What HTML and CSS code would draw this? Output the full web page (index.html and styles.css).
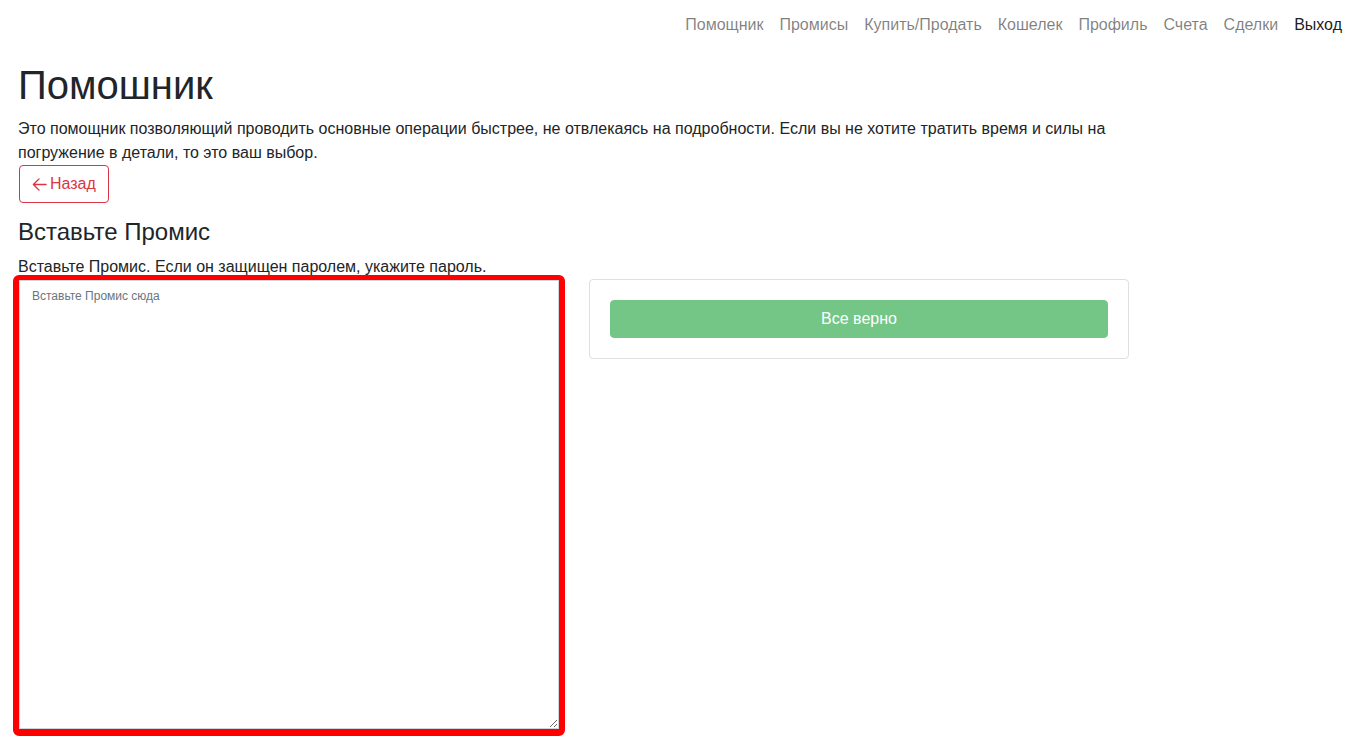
FILE: index.html
```html
<!DOCTYPE html>
<html lang="ru">
<head>
<meta charset="utf-8">
<title>Помошник</title>
<link rel="stylesheet" href="styles.css">
</head>
<body>
<nav class="navbar">
  <ul class="nav-list">
    <li><a class="nav-link" href="#">Помощник</a></li>
    <li><a class="nav-link" href="#">Промисы</a></li>
    <li><a class="nav-link" href="#">Купить/Продать</a></li>
    <li><a class="nav-link" href="#">Кошелек</a></li>
    <li><a class="nav-link" href="#">Профиль</a></li>
    <li><a class="nav-link" href="#">Счета</a></li>
    <li><a class="nav-link" href="#">Сделки</a></li>
    <li><a class="nav-link nav-link-active" href="#">Выход</a></li>
  </ul>
</nav>
<main class="content">
  <h1 class="page-title">Помошник</h1>
  <p class="lead-text">Это помощник позволяющий проводить основные операции быстрее, не отвлекаясь на подробности. Если вы не хотите тратить время и силы на погружение в детали, то это ваш выбор.</p>
  <button class="btn-back" type="button">
    <svg class="arrow-icon" width="15" height="15" viewBox="0 0 16 16" aria-hidden="true"><path d="M15 8H1.5M7.5 2L1.5 8l6 6" fill="none" stroke="currentColor" stroke-width="1.5" stroke-linecap="round" stroke-linejoin="round"/></svg>Назад
  </button>
  <h4 class="section-title">Вставьте Промис</h4>
  <p class="section-text">Вставьте Промис. Если он защищен паролем, укажите пароль.</p>
  <div class="row">
    <div class="col">
      <div class="highlight">
        <textarea class="promise-input" placeholder="Вставьте Промис сюда"></textarea>
      </div>
    </div>
    <div class="col">
      <div class="card">
        <button class="btn-ok" type="button" disabled>Все верно</button>
      </div>
    </div>
  </div>
</main>
</body>
</html>
```
FILE: styles.css
```css
* { box-sizing: border-box; }
html, body { margin: 0; padding: 0; }
body {
  font-family: "Liberation Sans", Arial, sans-serif;
  font-size: 16px;
  line-height: 1.5;
  color: #212529;
  background: #fff;
}
.navbar {
  display: flex;
  justify-content: flex-end;
  padding: 13px 9px 0 0;
  height: 44px;
}
.nav-list {
  list-style: none;
  margin: 0;
  padding: 0;
  display: flex;
}
.nav-link {
  display: block;
  padding: 0 8px;
  line-height: 24px;
  color: rgba(0,0,0,.5);
  text-decoration: none;
}
.nav-link-active { color: rgba(0,0,0,.9); }
.content {
  padding: 0 0 0 18px;
  width: 1128px;
}
.page-title {
  margin: 17px 0 8px;
  font-size: 40px;
  font-weight: 400;
  line-height: 48px;
}
.lead-text { margin: 0; }
.btn-back {
  display: inline-flex;
  align-items: center;
  gap: 3px;
  height: 38px;
  padding: 6px 12px;
  border: 1px solid #dc3545;
  border-radius: 4px;
  background: #fff;
  color: #dc3545;
  font-family: inherit;
  font-size: 16px;
  line-height: 24px;
  margin-left: 1px;
}
.arrow-icon { display: block; }
.section-title {
  margin: 15px 0 8px;
  font-size: 24px;
  font-weight: 400;
  line-height: 1.2;
}
.section-text { margin: 0; }
.row {
  display: grid;
  grid-template-columns: 540px 540px;
  gap: 30px;
  padding-left: 1px;
}
.highlight {
  border-style: solid;
  border-color: #ff0000;
  border-width: 5px 6px 7px 6px;
  border-radius: 6px;
  margin: -4px -6px 0 -6px;
}
.promise-input {
  display: block;
  width: 540px;
  height: 449px;
  padding: 6px 12px;
  border: 1px solid #ced4da;
  border-radius: 0;
  font-family: inherit;
  font-size: 12px;
  line-height: 1.5;
  color: #495057;
  resize: vertical;
}
.promise-input::placeholder { color: #6c757d; }
.card {
  border: 1px solid #dfdfdf;
  border-radius: 4px;
  padding: 20px;
}
.btn-ok {
  display: block;
  width: 100%;
  height: 38px;
  border: 1px solid #73c686;
  border-radius: 4px;
  background: #73c686;
  color: #fff;
  font-family: inherit;
  font-size: 16px;
  line-height: 24px;
}
```
